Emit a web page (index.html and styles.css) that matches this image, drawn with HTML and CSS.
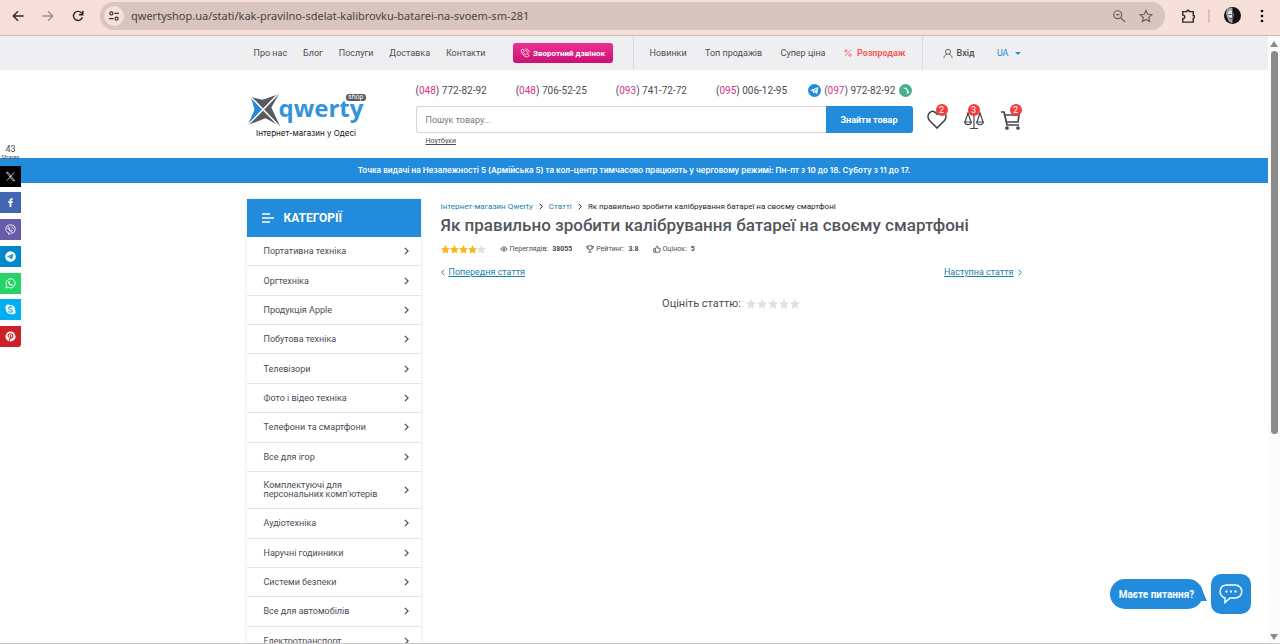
FILE: index.html
```
<!DOCTYPE html>
<html lang="uk">
<head>
  <meta charset="UTF-8">
  <title>Як правильно зробити калібрування батареї на своєму смартфоні</title>
  <link rel="stylesheet" href="styles.css">
</head>
<body>
  <!-- shared icons -->
  <svg class="sprite" aria-hidden="true">
    <symbol id="star" viewBox="1 1 22 22"><path d="M12 1l3.300 7.200 7.700.9-5.700 5.300 1.500 7.800L12 18.400 5.200 22.200l1.500-7.800L1 9.100l7.700-.9z"/></symbol>
    <symbol id="arrow" viewBox="0 0 6 10"><path d="M1 1l4 4-4 4" fill="none" stroke="currentColor" stroke-width="1.500"/></symbol>
    <symbol id="plane" viewBox="-3 -3 30 30"><path d="M2 11.500L21 4l-3 16-6-4-3 3-1-5z" fill="#fff"/><path d="M9 13.500L17 8l-6 7" fill="none" stroke="currentColor" stroke-width="1.200"/></symbol>
    <symbol id="phone" viewBox="0 0 24 24"><path d="M5 3l4 1 1 5-2 2c1 2.500 2.500 4 5 5l2-2 5 1 1 4c-1 2-3 2.500-5 2C9 20 4 14 3 7c0-2 .5-3.500 2-4z"/></symbol>
  </svg>

  <div class="browser-bar">
    <button class="nav-btn" aria-label="Назад"><svg viewBox="0 0 16 16"><path d="M14.500 8h-12M8 2.500L2.500 8 8 13.500"/></svg></button>
    <button class="nav-btn forward" aria-label="Вперед"><svg viewBox="0 0 16 16"><path d="M1.500 8h12M8 2.500L13.500 8 8 13.500"/></svg></button>
    <button class="nav-btn" aria-label="Оновити"><svg viewBox="0 0 16 16"><path d="M13 9.500A5.200 5.200 0 1 1 12 4.500L13.500 6M13.500 2v4.500H9"/></svg></button>
    <div class="address">
      <button class="site-info" aria-label="Про сайт"><svg viewBox="0 0 16 16"><circle cx="4.500" cy="4.500" r="2"/><path d="M8.500 4.500h6M1.500 11.500h6"/><circle cx="11.500" cy="11.500" r="2"/></svg></button>
      <input type="text" aria-label="Адреса" value="qwertyshop.ua/stati/kak-pravilno-sdelat-kalibrovku-batarei-na-svoem-sm-281">
      <svg class="bar-icon" viewBox="0 0 16 16"><circle cx="6.500" cy="6.500" r="4.500"/><path d="M10 10l5 5M4.500 6.500h4"/></svg>
      <svg class="bar-icon" viewBox="0 0 24 24"><path stroke-width="2" d="M12 2.500l2.900 6.500 7.100.7-5.300 4.700 1.500 7L12 17.800l-6.200 3.600 1.500-7L2 9.700 9.100 9z"/></svg>
    </div>
    <button class="nav-btn ext" aria-label="Розширення"><svg viewBox="0 0 16 16"><path d="M2 3h4.500a1.500 1.500 0 0 1 3 0H14v4.500a1.500 1.500 0 0 1 0 3V15H2v-4c3 0 3-4 0-4z"/></svg></button>
    <span class="bar-divider"></span>
    <button class="avatar" aria-label="Профіль"><svg viewBox="0 0 18 18"><circle cx="9" cy="9" r="9" fill="#111"/><path d="M9 1C3 0 1 5 3 10c1 4 3 7 6 7z" fill="#9aa3a3"/><path d="M8 4C5 3 4 6 5 10l4 3z" fill="#e6e9e8"/><path d="M5 8h3M6 12h3" stroke="#333"/><path d="M9 4l2 4-2 6z" fill="#55605f"/></svg></button>
    <button class="dots" aria-label="Меню"><svg viewBox="0 0 4 16"><circle cx="2" cy="3" r="1.300"/><circle cx="2" cy="8" r="1.300"/><circle cx="2" cy="13" r="1.300"/></svg></button>
  </div>

  <div class="viewport">
    <div class="page">
      <div class="topbar">
        <div class="container">
          <nav class="menu menu-main">
            <a href="#">Про нас</a><a href="#">Блог</a><a href="#">Послуги</a><a href="#">Доставка</a><a href="#">Контакти</a>
          </nav>
          <button class="callback"><svg viewBox="0 0 24 24"><use href="#phone"/><path d="M13 2c5 0 9 4 9 9M13 6c3 0 5 2 5 5"/></svg>Зворотний дзвінок</button>
          <nav class="menu menu-shop">
            <a href="#">Новинки</a><a href="#">Топ продажів</a><a href="#">Супер ціна</a>
            <a href="#" class="sale"><svg viewBox="0 0 10 10"><path d="M1 9l8-8"/><circle cx="2.500" cy="2.500" r="1.500"/><circle cx="7.500" cy="7.500" r="1.500"/></svg>Розпродаж</a>
          </nav>
          <a href="#" class="login"><svg viewBox="0 0 12 12"><circle cx="6" cy="4" r="3"/><path d="M1 11.500c.5-3 2-4 3.500-4.500M11 11.500C10.500 8.500 9 7.500 7.500 7"/></svg>Вхід</a>
          <button class="lang">UA <span class="caret"></span></button>
        </div>
      </div>

      <header class="container header">
        <a href="#" class="logo">
          <span class="logo-row">
            <svg viewBox="0 0 36 36">
              <path d="M4 4l12 3L33 1 25 15l9 19-15-8L1 33l7-16z" fill="#575c62"/>
              <path d="M4 4l12 13L1 33l7-16z" fill="#238bdc"/>
              <path d="M4 4l29 30M32 1L1 33" stroke="#fff" stroke-width="1.500"/>
            </svg>
            <span class="logo-name">qwerty</span>
            <span class="logo-shop">shop</span>
          </span>
          <span class="slogan">Інтернет-магазин у Одесі</span>
        </a>
        <div class="header-mid">
          <div class="phones">
            <a href="#">(<b>048</b>) 772-82-92</a>
            <a href="#">(<b>048</b>) 706-52-25</a>
            <a href="#">(<b>093</b>) 741-72-72</a>
            <a href="#">(<b>095</b>) 006-12-95</a>
            <a href="#" class="messenger"><svg class="tg" viewBox="0 0 24 24"><use href="#plane"/></svg>(<b>097</b>) 972-82-92<svg class="vb" viewBox="0 0 14 14"><path d="M4 4h4l3 5-2 2-1-5z" fill="#fff"/></svg></a>
          </div>
          <form class="search">
            <input type="text" placeholder="Пошук товару..." aria-label="Пошук товару">
            <button type="button">Знайти товар</button>
          </form>
          <a href="#" class="hint">Ноутбуки</a>
        </div>
        <div class="actions">
          <a href="#" aria-label="Обране"><svg viewBox="0 0 22 22"><path d="M11 20L3.500 12.500C-1 7 6-1 11 6c5-7 12 1 7.500 6.500z"/></svg><span class="badge">2</span></a>
          <a href="#" aria-label="Порівняння"><svg class="scales" viewBox="0 0 22 22"><path d="M11 3v17M7 20.500h8M4 5h14M5 5L2 14M5 5l3 9M17 5l-3 9M17 5l3 9M1.500 14h7c-.5 3.500-6.500 3.500-7 0zM13.500 14h7c-.5 3.500-6.500 3.500-7 0z"/></svg><span class="badge">3</span></a>
          <a href="#" aria-label="Кошик"><svg viewBox="0 0 22 22"><path d="M1 4h3l3 13h12M5 7h14l-1 7H6"/><circle cx="7" cy="20" r="1"/><circle cx="18" cy="20" r="1"/></svg><span class="badge">2</span></a>
        </div>
      </header>

      <div class="notice">Точка видачі на Незалежності 5 (Армійська 5) та кол-центр тимчасово працюють у черговому режимі: Пн-пт з 10 до 18. Суботу з 11 до 17.</div>

      <div class="container content">
        <aside class="sidebar">
          <h2><svg viewBox="0 0 12 10"><path d="M0 1h8M0 5h12M0 9h8"/></svg>КАТЕГОРІЇ</h2>
          <ul>
            <li><a href="#">Портативна техніка<svg><use href="#arrow"/></svg></a></li>
            <li><a href="#">Оргтехніка<svg><use href="#arrow"/></svg></a></li>
            <li><a href="#">Продукція Apple<svg><use href="#arrow"/></svg></a></li>
            <li><a href="#">Побутова техніка<svg><use href="#arrow"/></svg></a></li>
            <li><a href="#">Телевізори<svg><use href="#arrow"/></svg></a></li>
            <li><a href="#">Фото і відео техніка<svg><use href="#arrow"/></svg></a></li>
            <li><a href="#">Телефони та смартфони<svg><use href="#arrow"/></svg></a></li>
            <li><a href="#">Все для ігор<svg><use href="#arrow"/></svg></a></li>
            <li><a href="#"><span>Комплектуючі для персональних комп'ютерів</span><svg><use href="#arrow"/></svg></a></li>
            <li><a href="#">Аудіотехніка<svg><use href="#arrow"/></svg></a></li>
            <li><a href="#">Наручні годинники<svg><use href="#arrow"/></svg></a></li>
            <li><a href="#">Системи безпеки<svg><use href="#arrow"/></svg></a></li>
            <li><a href="#">Все для автомобілів<svg><use href="#arrow"/></svg></a></li>
            <li><a href="#">Електротранспорт<svg><use href="#arrow"/></svg></a></li>
          </ul>
        </aside>

        <main class="article">
          <nav class="crumbs">
            <a href="#">Інтернет-магазин Qwerty</a><svg><use href="#arrow"/></svg><a href="#">Статті</a><svg><use href="#arrow"/></svg><span>Як правильно зробити калібрування батареї на своєму смартфоні</span>
          </nav>
          <h1>Як правильно зробити калібрування батареї на своєму смартфоні</h1>
          <div class="stats">
            <span class="stars"><svg><use href="#star"/></svg><svg><use href="#star"/></svg><svg><use href="#star"/></svg><svg><use href="#star"/></svg><svg class="off"><use href="#star"/></svg></span>
            <span class="stat"><svg viewBox="0 0 10 10"><path d="M1 5c2-3.500 6-3.500 8 0-2 3.500-6 3.500-8 0z"/><circle cx="5" cy="5" r="1.300"/></svg>Переглядів: <b>38055</b></span>
            <span class="stat"><svg viewBox="0 0 10 10"><path d="M2.500 1h5v2.500c0 3-5 3-5 0zM2.500 2H.7c0 2 1 3 2.500 3M7.500 2h1.800c0 2-1 3-2.500 3M5 6v3M3 9h4"/></svg>Рейтинг: <b>3.8</b></span>
            <span class="stat"><svg viewBox="0 0 10 10"><path d="M1 4.500h2v4.500H1zM3 4.500L5 1.200c1 0 1.200.8.700 2.800H9L8.300 9H3"/></svg>Оцінок: <b>5</b></span>
          </div>
          <div class="pager">
            <a href="#"><svg class="prev"><use href="#arrow"/></svg><span>Попередня стаття</span></a>
            <a href="#"><span>Наступна стаття</span><svg><use href="#arrow"/></svg></a>
          </div>
          <div class="rate">Оцініть статтю:
            <span class="stars"><svg class="off"><use href="#star"/></svg><svg class="off"><use href="#star"/></svg><svg class="off"><use href="#star"/></svg><svg class="off"><use href="#star"/></svg><svg class="off"><use href="#star"/></svg></span>
          </div>
        </main>
      </div>

      <div class="share">
        <div class="share-count">43<small>Shares</small></div>
        <a href="#" class="x" aria-label="X"><svg viewBox="0 0 24 24"><path d="M3 3h4l14 18h-4zM20 3L4 21" fill="none" stroke="#fff" stroke-width="1.500"/></svg></a>
        <a href="#" class="facebook" aria-label="Facebook"><svg viewBox="0 0 24 24"><path d="M10 22v-9H7V9h3V7c0-3 2-5 7-4v3c-3 0-3 0-3 3h3l-.5 4H14v9z" fill="#fff"/></svg></a>
        <a href="#" class="viber" aria-label="Viber"><svg viewBox="0 0 24 24" fill="none" stroke="#fff" stroke-width="1.800"><path d="M12 2c7 0 10 2 10 9s-3 9-10 9l-4 3v-4c-4-1-6-3-6-8 0-7 3-9 10-9z"/><path d="M8 6c-2 1-2 3 0 6s5 5 7 4 1-2-1-3l-2 1-3-3 1-2zM13 6c3 0 5 2 5 5"/></svg></a>
        <a href="#" class="telegram" aria-label="Telegram"><svg viewBox="0 0 24 24"><circle cx="12" cy="12" r="11.500" fill="#fff"/><path d="M4 12l14-6-2.500 12-4-3-2.500 2-.5-4z" fill="#0088cc"/><path d="M8.500 13l7-5-5.500 6" fill="#fff"/></svg></a>
        <a href="#" class="whatsapp" aria-label="WhatsApp"><svg viewBox="0 0 24 24"><path d="M2 22l1.500-5.500a10 10 0 1 1 4 4z" fill="none" stroke="#fff" stroke-width="2"/><path d="M8 7l2 0 1 3-1 1c1 2 2 3 4 3l1-1 3 1.500c0 2-2 3-4 2.500-4-1-7-4-7.500-7.500C6.500 8.500 7 7.500 8 7z" fill="#fff"/></svg></a>
        <a href="#" class="skype" aria-label="Skype"><svg viewBox="0 0 24 24"><circle cx="12" cy="12" r="10" fill="#fff"/><circle cx="7" cy="7" r="6" fill="#fff"/><circle cx="17" cy="17" r="6" fill="#fff"/><path d="M16 8c-2-3-8-2-8 1 0 4 8 2 8 6 0 3-6 4-8.500 1" fill="none" stroke="#00aff0" stroke-width="2.500"/></svg></a>
        <a href="#" class="pinterest" aria-label="Pinterest"><svg viewBox="0 0 24 24"><circle cx="12" cy="12" r="11" fill="#fff"/><path d="M8 13c-3-4 0-7 4-7s6 3 5 6-4 4-5.500 2M12.500 9L9.500 21" fill="none" stroke="#cb2027" stroke-width="2.500"/></svg></a>
      </div>

      <div class="chat">
        <button class="chat-text">Маєте питання?</button>
        <button class="chat-icon" aria-label="Чат"><svg viewBox="0 0 24 20"><path d="M8 1h8c9 0 9 13 0 13h-5l-5 4.500V14C-1 12-.5 1 8 1z"/><path d="M6.500 7.500h2M11 7.500h2M15.500 7.500h2" stroke-width="2"/></svg></button>
      </div>
    </div>

    <div class="scrollbar"><span class="up"></span><span class="thumb"></span><span class="down"></span></div>
  </div>
</body>
</html>
```
FILE: styles.css
```
* {
  box-sizing: border-box;
}
body {
  margin: 0;
  height: 100vh;
  display: flex;
  flex-direction: column;
  overflow: hidden;
  font-family: Roboto, "Liberation Sans", sans-serif;
  font-size: 9px;
  color: #4a4d52;
  background: #fff;
}
a {
  color: inherit;
  text-decoration: none;
}
button {
  border: 0;
  padding: 0;
  background: none;
  font: inherit;
  color: inherit;
  cursor: pointer;
}
svg {
  display: block;
  flex: none;
}
.sprite {
  position: absolute;
  width: 0;
  height: 0;
}

/* browser */
.browser-bar {
  flex: none;
  height: 36px;
  padding: 0 16px 4px 10px;
  display: flex;
  align-items: center;
  background: #f7e0d9;
  border-bottom: 1px solid #cdb9b4;
}
.nav-btn {
  width: 16px;
  margin-right: 14px;
}
.nav-btn svg, .bar-icon {
  width: 14px;
  height: 14px;
  margin: auto;
  fill: none;
  stroke: #29292b;
  stroke-width: 1.6;
}
.forward svg {
  stroke: #a08f8b;
}
.address {
  flex: 1;
  height: 28px;
  margin-right: 15px;
  padding: 0 12px 0 4px;
  display: flex;
  align-items: center;
  gap: 13px;
  border-radius: 14px;
  background: #d8c5bf;
}
.site-info {
  width: 20px;
  height: 20px;
  border-radius: 50%;
  background: #f7e0d9;
}
.site-info svg {
  width: 12px;
  height: 12px;
  margin: auto;
  fill: none;
  stroke: #333;
  stroke-width: 1.6;
}
.address input {
  flex: 1;
  min-width: 0;
  margin-left: -6px;
  padding: 0;
  border: 0;
  outline: 0;
  background: none;
  font: 11px "Noto Sans", sans-serif;
  color: #4a4240;
}
.address .bar-icon {
  margin: 0;
  stroke: #6b5e5b;
  stroke-width: 1.4;
}
.nav-btn.ext {
  margin-right: 12px;
}
.bar-divider {
  width: 2px;
  height: 14px;
  margin-right: 14px;
  background: #f3b9a6;
}
.avatar svg {
  width: 17px;
  height: 17px;
}
.dots {
  margin-left: 19px;
}
.dots svg {
  width: 4px;
  height: 16px;
}

/* page */
.viewport {
  flex: 1;
  min-height: 0;
  display: flex;
  border-bottom: 1px solid #c8c8c8;
}
.page {
  flex: 1;
  min-width: 0;
  position: relative;
  overflow: hidden;
}
.container {
  max-width: 775px;
  margin: 0 auto;
}
.topbar {
  background: #efeff2;
}
.topbar .container {
  height: 34px;
  padding: 0 1px 0 7px;
  display: flex;
  align-items: center;
}
.menu {
  display: flex;
  align-items: center;
  justify-content: space-between;
  white-space: nowrap;
}
.menu-main {
  width: 232px;
}
.callback {
  width: 100px;
  height: 20px;
  margin: 0 20px 0 27px;
  display: flex;
  align-items: center;
  justify-content: center;
  gap: 3px;
  border-radius: 3px;
  background: linear-gradient(#ea3193, #cd1172);
  color: #fff;
  font-size: 8px;
  font-weight: bold;
  white-space: nowrap;
}
.callback svg {
  width: 10px;
  height: 10px;
  fill: none;
  stroke: #fff;
  stroke-width: 1.8;
}
.menu-shop {
  width: 290px;
  height: 34px;
  padding: 0 16px;
  border: solid #dcdce0;
  border-width: 0 1px;
}
.sale {
  display: flex;
  align-items: center;
  gap: 5px;
  color: #f75c5c;
  font-weight: bold;
}
.sale svg {
  width: 8px;
  height: 8px;
  fill: none;
  stroke: #f75c5c;
}
.login {
  margin-left: 20px;
  display: flex;
  align-items: center;
  gap: 4px;
  font-weight: 500;
}
.login svg {
  width: 10px;
  height: 11px;
  fill: none;
  stroke: #44474c;
}
.lang {
  margin-left: auto;
  display: flex;
  align-items: center;
  gap: 6px;
  color: #238bdc;
}
.caret {
  border: 3px solid transparent;
  border-top-color: #238bdc;
  border-bottom: 0;
}

.header {
  height: 88px;
  display: flex;
}
.logo {
  width: 119px;
  margin-right: 50px;
  padding-top: 23px;
}
.logo-row {
  position: relative;
  display: flex;
  height: 35px;
}
.logo-row svg {
  width: 35px;
  height: 35px;
}
.logo-name {
  margin-left: -3px;
  font: bold 24px/30px "Open Sans", sans-serif;
  color: #3394dd;
}
.logo-shop {
  position: absolute;
  right: 0;
  top: 1px;
  padding: 0 2px;
  border-radius: 3px;
  background: #575c62;
  color: #fff;
  font-size: 7px;
  line-height: 7px;
}
.slogan {
  display: block;
  text-align: center;
  font: 8px/10px Inter, sans-serif;
  color: #111;
}
.header-mid {
  width: 497px;
  padding-top: 13px;
}
.phones {
  height: 14px;
  display: flex;
  align-items: center;
  gap: 29px;
  font-size: 10px;
  white-space: nowrap;
}
.phones b {
  font-weight: normal;
  color: #d6338a;
}
.phones .messenger {
  margin-left: -8px;
  display: flex;
  align-items: center;
  white-space: pre;
}
.messenger svg {
  width: 13px;
  height: 13px;
  border-radius: 50%;
}
.tg {
  margin-right: 3px;
  background: #238bdc;
  color: #238bdc;
}
.vb {
  margin-left: 4px;
  background: #45b08c;
}
.search {
  height: 27px;
  margin-top: 9px;
  display: flex;
}
.search input {
  flex: 1;
  min-width: 0;
  padding: 0 9px;
  border: 1px solid #d5d5d8;
  border-right: 0;
  border-radius: 3px 0 0 3px;
  font: 9px Roboto, sans-serif;
}
.search input::placeholder {
  color: #77797d;
}
.search button {
  width: 87px;
  border-radius: 0 3px 3px 0;
  background: #238bdc;
  color: #fff;
  font-weight: bold;
}
.hint {
  display: block;
  margin: 4px 0 0 10px;
  font-size: 7px;
  line-height: 9px;
  text-decoration: underline;
}
.actions {
  flex: 1;
  padding: 38px 0 0 13px;
  display: flex;
  justify-content: space-between;
}
.actions a {
  position: relative;
  width: 22px;
  height: 22px;
}
.actions svg {
  width: 22px;
  height: 22px;
  fill: none;
  stroke: #44474c;
  stroke-width: 1.7;
}
.actions .scales {
  stroke-width: 1.2;
}
.badge {
  position: absolute;
  top: -4px;
  right: 0;
  width: 12px;
  height: 12px;
  border-radius: 50%;
  background: #f43d3d;
  color: #fff;
  line-height: 12px;
  text-align: center;
}
.actions a:nth-child(2) .badge {
  right: 5px;
}
.notice {
  height: 25px;
  background: #238bdc;
  color: #fff;
  font: 600 8px/25px Inter, sans-serif;
  text-align: center;
}

.content {
  padding-top: 16px;
  display: flex;
  gap: 20px;
}
.sidebar {
  flex: none;
  width: 174px;
  box-shadow: 0 0 4px rgba(60, 70, 110, 0.15);
}
.sidebar h2 {
  height: 38px;
  margin: 0;
  padding-left: 15px;
  display: flex;
  align-items: center;
  gap: 10px;
  background: #238bdc;
  color: #fff;
  font-size: 12px;
}
.sidebar h2 svg {
  width: 12px;
  height: 10px;
  stroke: #fff;
  stroke-width: 1.4;
}
.sidebar ul {
  min-height: 419px;
  margin: 0;
  padding: 0;
  display: flex;
  flex-direction: column;
  list-style: none;
}
.sidebar li {
  flex: 1 0 auto;
  display: flex;
  border-bottom: 1px solid #e4e5e9;
}
.sidebar li a {
  flex: 1;
  padding: 9px 12px 9px 17px;
  display: flex;
  align-items: center;
  justify-content: space-between;
  line-height: 10px;
}
.sidebar li span {
  width: 120px;
  line-height: 9px;
}
.sidebar li svg {
  width: 5px;
  height: 8px;
}
.article {
  flex: 1;
  min-width: 0;
}
.crumbs {
  height: 15px;
  display: flex;
  align-items: center;
  gap: 6px;
  font-size: 8px;
  color: #1c1c1e;
}
.crumbs a, .pager {
  color: #1a7fae;
}
.crumbs svg {
  width: 4px;
  height: 7px;
}
h1 {
  margin: 0;
  font-size: 17px;
  font-weight: 500;
  line-height: 22px;
  color: #54565b;
}
.stats {
  height: 16px;
  margin-top: 5px;
  display: flex;
  align-items: center;
  gap: 14px;
  font-size: 7px;
}
.stars {
  display: flex;
}
.stars svg {
  width: 9px;
  height: 9px;
  fill: #fdb515;
}
.stars .off {
  fill: #dfe0e3;
}
.stat {
  display: flex;
  align-items: center;
  gap: 2px;
}
.stat b {
  margin-left: 2px;
}
.stat svg {
  width: 8px;
  height: 8px;
  fill: none;
  stroke: #44474c;
}
.pager {
  margin-top: 9px;
  display: flex;
  justify-content: space-between;
  line-height: 12px;
}
.pager a {
  display: flex;
  align-items: center;
  gap: 4px;
}
.pager span {
  text-decoration: underline;
}
.pager svg {
  width: 4px;
  height: 7px;
}
.pager .prev {
  transform: scaleX(-1);
}
.rate {
  margin-top: 18px;
  display: flex;
  align-items: center;
  justify-content: center;
  gap: 5px;
  font-size: 11px;
  line-height: 16px;
}
.rate .stars {
  gap: 1px;
}
.rate .stars svg {
  width: 10px;
  height: 10px;
}

/* floating blocks */
.share {
  position: absolute;
  left: 0;
  top: 108px;
  width: 21px;
  height: 203px;
  display: flex;
  flex-direction: column;
  justify-content: space-between;
}
.share-count {
  height: 16px;
  text-align: center;
  line-height: 11px;
}
.share-count small {
  display: block;
  font-size: 6px;
  line-height: 4px;
}
.share a {
  height: 21px;
  display: flex;
  align-items: center;
  justify-content: center;
}
.share svg {
  width: 11px;
  height: 11px;
}
.x { background: #000; }
.facebook { background: #4267b2; }
.viber { background: #665ca7; }
.telegram { background: #0088cc; }
.whatsapp { background: #25d366; }
.skype { background: #00aff0; }
.pinterest {
  background: #cb2027;
  border-radius: 0 0 3px 0;
}
.chat {
  position: absolute;
  right: 17px;
  bottom: 29px;
  display: flex;
  align-items: center;
  gap: 8px;
  color: #fff;
}
.chat-text {
  position: relative;
  width: 93px;
  height: 30px;
  border-radius: 15px;
  background: #238bdc;
  font-size: 10px;
  font-weight: bold;
}
.chat-text::after {
  content: "";
  position: absolute;
  z-index: -1;
  right: -4px;
  bottom: 8px;
  width: 14px;
  height: 16px;
  background: #238bdc;
  clip-path: polygon(0 0, 50% 0, 100% 100%, 0 100%);
}
.chat-icon {
  width: 40px;
  height: 40px;
  border-radius: 10px;
  background: #238bdc;
}
.chat-icon svg {
  width: 24px;
  height: 20px;
  margin: auto;
  fill: none;
  stroke: #fff;
  stroke-width: 1.5;
}

.scrollbar {
  flex: none;
  width: 12px;
  padding: 5px 0 3px;
  display: flex;
  flex-direction: column;
  align-items: center;
  background: #fbfbfb;
}
.thumb {
  width: 7px;
  height: 64%;
  margin: 4px 0 auto;
  border-radius: 4px;
  background: #8b8b8b;
}
.up, .down {
  border: 4px solid transparent;
}
.up {
  border-top: 0;
  border-bottom: 6px solid #8b8b8b;
}
.down {
  border-bottom: 0;
  border-top: 6px solid #8b8b8b;
}
```
